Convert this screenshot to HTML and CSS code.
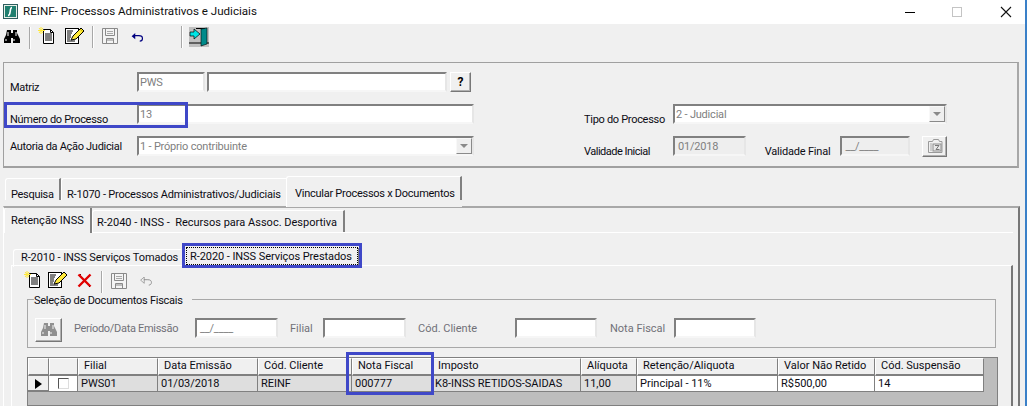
FILE: index.html
```html
<!DOCTYPE html>
<html lang="pt">
<head>
<meta charset="utf-8">
<title>REINF- Processos Administrativos e Judiciais</title>
<link rel="stylesheet" href="styles.css">
</head>
<body>
<div class="window">
  <header class="titlebar">
    <svg class="app-icon" width="16" height="16" viewBox="0 0 16 16"><rect x="0.5" y="0.5" width="14" height="14" fill="#e8efe8" stroke="#2f5f5f"/><rect x="2" y="2" width="11" height="11" fill="#1f7f6f"/><path d="M9 3.5C7.5 3.5 7.5 5 7.2 7.5S6.5 11.5 5 11.5" fill="none" stroke="#fff" stroke-width="1.6"/></svg>
    <span class="title-text">REINF- Processos Administrativos e Judiciais</span>
    <div class="win-controls">
      <svg width="12" height="12" viewBox="0 0 12 12"><path d="M1 6.5h10" stroke="#000"/></svg>
      <svg class="win-max" width="12" height="12" viewBox="0 0 12 12"><rect x="1.5" y="1.5" width="9" height="9" fill="none" stroke="#c4c4c4"/></svg>
      <svg class="win-close" width="12" height="12" viewBox="0 0 12 12"><path d="M1 1l10 10M11 1L1 11" stroke="#111" stroke-width="1.1"/></svg>
    </div>
  </header>

  <div class="toolbar">
    <svg class="ic-bin" width="16" height="14" viewBox="0 0 16 14"><path d="M3 0h4v3h2V0h4v3l1 2 2 4v4H9V8H7v5H0V9l2-4z" fill="#000"/><path d="M4 2v4M12 2v4M2 9v2M10 9v2" stroke="#fff" fill="none"/></svg>
    <i class="sep sep-a"></i>
    <svg class="ic-new" width="18" height="17" viewBox="0 0 18 17"><path d="M5.500 2.500h7l3 3v11h-10z" fill="#fff" stroke="#000"/><path d="M12.500 2.500v3h3" fill="none" stroke="#000"/><path d="M7 7h7M7 9h7M7 11h7M7 13h7" stroke="#000"/><path d="M3 0v7M0 3.500h7M1 1l4 5M5 1L1 6" stroke="#ffe93a" stroke-width="1"/></svg>
    <svg class="ic-edit" width="20" height="17" viewBox="0 0 20 17"><rect x="0.500" y="1.500" width="13" height="15" fill="#fff" stroke="#000"/><path d="M2 4h6M2 6h5M2 8h4M2 10h4M2 12h3M2 14h8" stroke="#000"/><path d="M6 13l2-4 8-8 3 3-8 8z" fill="#ffe93a" stroke="#000"/><path d="M15 2l3 3" stroke="#c9b400"/></svg>
    <i class="sep sep-b"></i>
    <svg class="ic-save" width="16" height="16" viewBox="0 0 16 16"><path d="M.5.500h15v15H.5z" fill="#f4f4f4" stroke="#8a8a8a"/><path d="M3.500 1v6.500h9V1M4 12h8M4.500 15v-4.500h7V15" fill="none" stroke="#8a8a8a"/><path d="M5 3.500h6M5 5.500h6" stroke="#a8a8a8"/></svg>
    <svg class="ic-undo" width="13" height="9" viewBox="0 0 13 10"><path d="M0 3.500l4-3.500v7z" fill="#000080"/><path d="M3 3h5c3 0 4 1.500 4 3s-1 3-3 3" fill="none" stroke="#000080" stroke-width="1.300"/></svg>
    <i class="sep sep-c"></i>
    <svg class="ic-exit" width="20" height="20" viewBox="0 0 20 20"><rect width="20" height="20" fill="#c0c0c0"/><path d="M0 16h20" stroke="#000"/><path d="M7 1.500h9V16" fill="none" stroke="#000"/><path d="M12 2l6-1v16l-6 2z" fill="#008a8a" stroke="#000" stroke-width=".6"/><path d="M1 5h4V2l6 5-6 5V9H1z" fill="#00e5e5" stroke="#000" stroke-width=".7"/></svg>
  </div>

  <section class="form-panel">
    <div class="form-grid">
      <label class="lbl lbl-matriz">Matriz</label>
      <div class="field-row row-a">
        <span class="input input-pws">PWS</span>
        <span class="input input-name"></span>
        <button class="btn btn-help" type="button">?</button>
      </div>
      <label class="lbl lbl-num">Número do Processo</label>
      <span class="input input-num">13</span>
      <label class="lbl lbl-tipo">Tipo do Processo</label>
      <div class="input select sel-tipo"><span>2 - Judicial</span><i class="drop"><b></b></i></div>
      <label class="lbl lbl-aut">Autoria da Ação Judicial</label>
      <div class="input select sel-aut"><span>1 - Próprio contribuinte</span><i class="drop"><b></b></i></div>
      <label class="lbl lbl-vi">Validade Inicial</label>
      <div class="field-row row-val">
        <span class="input input-ro input-vi">01/2018</span>
        <label class="lbl lbl-vf">Validade Final</label>
        <span class="input input-ro input-vf">__/____</span>
        <button class="btn btn-cal" type="button">
          <svg width="16" height="15" viewBox="0 0 16 15"><path d="M1.500 2.500h4l1-2h5l1 2h2.500v11H1.500z" fill="none" stroke="#9a9a9a"/><rect x="6" y="5" width="8" height="7" fill="#e8e8e8" stroke="#8c8c8c"/><path d="M8 6.500h4L9 10.500h3.500" fill="none" stroke="#777"/><path d="M3 5h2M3 7h2M3 9h2M3 11h2" stroke="#aaa"/></svg>
        </button>
      </div>
    </div>
  </section>

  <nav class="tabs tabs-top">
    <span class="tab t-pesq">Pesquisa</span>
    <span class="tab t-1070">R-1070 - Processos Administrativos/Judiciais</span>
    <span class="tab t-vinc is-active">Vincular Processos x Documentos</span>
  </nav>
  <section class="tab-panel">
    <nav class="tabs tabs-mid">
      <span class="tab t-ret is-active">Retenção INSS</span>
      <span class="tab t-2040">R-2040 - INSS -&nbsp; Recursos para Assoc. Desportiva</span>
    </nav>
    <div class="mid-panel">
      <nav class="tabs tabs-low">
        <span class="tab t-2010">R-2010 - INSS Serviços Tomados</span>
        <span class="tab t-2020 is-active"><em>R-2020 - INSS Serviços Prestados</em></span>
      </nav>
      <div class="low-panel">
        <div class="toolbar toolbar-low">
          <svg class="ic-new2" width="18" height="17" viewBox="0 0 18 17"><path d="M5.500 2.500h7l3 3v11h-10z" fill="#fff" stroke="#000"/><path d="M12.500 2.500v3h3" fill="none" stroke="#000"/><path d="M7 7h7M7 9h7M7 11h7M7 13h7" stroke="#000"/><path d="M3 0v7M0 3.500h7M1 1l4 5M5 1L1 6" stroke="#ffe93a"/></svg>
          <svg class="ic-edit2" width="20" height="17" viewBox="0 0 20 17"><rect x="0.500" y="1.500" width="13" height="15" fill="#fff" stroke="#000"/><path d="M2 4h6M2 6h5M2 8h4M2 10h4M2 12h3M2 14h8" stroke="#000"/><path d="M6 13l2-4 8-8 3 3-8 8z" fill="#ffe93a" stroke="#000"/></svg>
          <svg class="ic-del" width="15" height="15" viewBox="0 0 15 15"><path d="M1.500 1.500l12 12M13.500 1.500l-12 12" stroke="#e00000" stroke-width="2.400"/><path d="M3 1l1 1M12 14l1-1" stroke="#700"/></svg>
          <i class="sep sep-d"></i>
          <svg class="ic-save2" width="16" height="16" viewBox="0 0 16 16"><path d="M.5.500h15v15H.5z" fill="#f4f4f4" stroke="#8a8a8a"/><path d="M3.500 1v6.500h9V1M4 12h8M4.500 15v-4.500h7V15" fill="none" stroke="#8a8a8a"/><path d="M5 3.500h6M5 5.500h6" stroke="#a8a8a8"/></svg>
          <svg class="ic-undo2" width="13" height="9" viewBox="0 0 13 10"><path d="M0 3.500l4-3.500v7z" fill="none" stroke="#8a8a8a" stroke-width=".8"/><path d="M3.500 3h4.500c3 0 4 1.500 4 3s-1 3-3 3" fill="none" stroke="#8a8a8a"/></svg>
        </div>
        <fieldset class="docs">
          <legend>Seleção de Documentos Fiscais</legend>
          <div class="docs-row">
            <button class="btn btn-find" type="button">
              <svg width="16" height="14" viewBox="0 0 16 14"><path d="M3 0h4v3h2V0h4v3l1 2 2 4v4H9V8H7v5H0V9l2-4z" fill="#8f8f8f"/><path d="M4 2v4M12 2v4M2 9v2M10 9v2" stroke="#f4f4f4"/></svg>
            </button>
            <label class="dim l-per">Período/Data Emissão</label>
            <span class="input f-per">__/____</span>
            <label class="dim l-fil">Filial</label>
            <span class="input f-fil"></span>
            <label class="dim l-cli">Cód. Cliente</label>
            <span class="input f-cli"></span>
            <label class="dim l-nf">Nota Fiscal</label>
            <span class="input f-nf"></span>
          </div>
        </fieldset>
        <div class="data-grid">
          <div class="g-row g-head">
            <span></span><span></span><span>Filial</span><span>Data Emissão</span><span>Cód. Cliente</span><span>Nota Fiscal</span><span>Imposto</span><span>Alíquota</span><span>Retenção/Aliquota</span><span>Valor Não Retido</span><span>Cód. Suspensão</span>
          </div>
          <div class="g-row g-data">
            <span class="c-ind"><b></b></span><span class="c-chk"><i></i></span><span>PWS01</span><span>01/03/2018</span><span>REINF</span><span>000777</span><span>K8-INSS RETIDOS-SAIDAS</span><span>11,00</span><span class="c-w">Principal - 11%</span><span class="c-w">R$500,00</span><span class="c-w">14</span>
          </div>
        </div>
      </div>
    </div>
  </section>

  <div class="hl hl-num"></div>
  <div class="hl hl-tab"></div>
  <div class="hl hl-nf"></div>
</div>
</body>
</html>
```
FILE: styles.css
```css
* { box-sizing: border-box; }
html, body { margin: 0; height: 406px; overflow: hidden; }
body { font: 11px/14px Roboto, "Liberation Sans", sans-serif; color: #0c0c14; background: #f0f0f0; }

.window { position: relative; height: 406px; display: flex; flex-direction: column; border-right: 2px solid #3a80c8; background: #f0f0f0; }

/* title bar */
.titlebar { flex: none; height: 24px; background: #fff; display: flex; align-items: center; }
.app-icon { margin-left: 3px; flex: none; }
.title-text { margin-left: 4px; font-size: 11.600px; color: #111; position: relative; top: -1px; }
.win-controls { margin-left: auto; display: flex; align-items: center; }
.win-max { margin-left: 35px; }
.win-close { margin-left: 37px; margin-right: 13px; }

/* toolbars */
.toolbar { flex: none; height: 38px; display: flex; align-items: flex-start; }
.toolbar > svg { flex: none; }
.sep { display: block; flex: none; width: 1px; height: 22px; background: #a8a8a8; box-shadow: 1px 0 0 #fff; }
.ic-bin { margin: 6px 0 0 4px; }
.sep-a { margin: 3px 0 0 9px; }
.ic-new { margin: 3px 0 0 8px; }
.ic-edit { margin: 3px 0 0 9px; }
.sep-b { margin: 2px 0 0 7px; }
.ic-save { margin: 4px 0 0 9px; }
.ic-undo { margin: 9px 0 0 13px; }
.sep-c { margin: 2px 0 0 37px; }
.ic-exit { margin: 3px 0 0 7px; }

.toolbar-low { height: 26px; }
.ic-new2 { margin: 5px 0 0 12px; }
.ic-edit2 { margin: 5px 0 0 6px; }
.ic-del { margin: 7px 0 0 9px; }
.sep-d { margin: 5px 0 0 9px; }
.ic-save2 { margin: 7px 0 0 9px; }
.ic-undo2 { margin: 11px 0 0 13px; }

/* top form */
.form-panel { flex: none; height: 106px; width: 1016px; margin-left: 3px; border: 1px solid #a0a0a0; border-bottom-width: 2px; border-right-width: 2px; border-right-color: #a8a8a8; padding: 9px 0 0 6px; }
.form-grid { display: grid; grid-template-columns: 127px 337px 110px 89px 274px; grid-template-rows: 20px 20px 20px; row-gap: 12px; }
.lbl { padding-top: 9px; white-space: nowrap; letter-spacing: -0.3px; }
.lbl-matriz { grid-area: 1 / 1; }
.row-a { grid-area: 1 / 2; }
.lbl-num { grid-area: 2 / 1; }
.input-num { grid-area: 2 / 2; }
.lbl-tipo { grid-area: 2 / 4; }
.sel-tipo { grid-area: 2 / 5; }
.lbl-aut { grid-area: 3 / 1; padding-top: 4px; }
.sel-aut { grid-area: 3 / 2; }
.lbl-vi { grid-area: 3 / 4; letter-spacing: -0.5px; }
.row-val { grid-area: 3 / 5; }

.field-row { display: flex; align-items: flex-start; }
.input { display: block; height: 20px; background: #fff; border: 2px solid; border-color: #808080 #e6e6e6 #f6f6f6 #808080; color: #808080; padding: 1px 0 0 1px; font-size: 11px; letter-spacing: -0.2px; line-height: 15px; white-space: nowrap; overflow: hidden; }
.input-pws { width: 68px; }
.input-name { width: 240px; margin-left: 2px; }
.input-ro { background: #eee; }
.input-vi { width: 73px; padding-left: 3px; }
.input-vf { width: 70px; padding-left: 3px; }
.lbl-vf { margin-left: 19px; width: 76px; letter-spacing: -0.2px; }
.select { display: flex; justify-content: space-between; }
.drop { flex: none; width: 16px; margin-top: -1px; background: #efefef; border: 1px solid; border-color: #f8f8f8 #8a8a8a #8a8a8a #f8f8f8; display: flex; align-items: center; justify-content: center; }
.drop b { width: 0; height: 0; border: 4px solid transparent; border-top: 4px solid #8a8a8a; border-bottom: 0; }

.btn { display: flex; align-items: center; justify-content: center; padding: 0; margin: 0; font: inherit; background: #f0f0f0; border: 1px solid; border-color: #fff #777 #777 #fff; box-shadow: inset -1px -1px 0 #b0b0b0; }
.btn-help { width: 21px; height: 20px; margin-left: 3px; font-weight: 700; font-size: 12px; color: #000; }
.btn-cal { width: 25px; height: 21px; margin-left: 12px; }
.btn-find { width: 27px; height: 24px; flex: none; }

/* tabs */
.tabs { flex: none; display: flex; align-items: flex-start; }
.tab { display: block; white-space: nowrap; border-top: 1px solid #fff; border-left: 1px solid #fff; border-right: 2px solid #808080; border-top-left-radius: 3px; background: #f0f0f0; }
.tabs-top { height: 30px; margin: 8px 0 0 5px; }
.t-pesq { width: 56px; height: 22px; margin-top: 2px; padding: 9px 0 0 5px; letter-spacing: -0.3px; }
.t-1070 { width: 225px; height: 22px; margin-top: 2px; padding: 9px 0 0 5px; letter-spacing: -0.2px; border-right: 0; }
.t-vinc { width: 176px; height: 31px; padding: 10px 0 0 8px; position: relative; z-index: 1; margin-bottom: -2px; letter-spacing: -0.26px; }
.t-vinc::after { content: ""; position: absolute; right: -2px; bottom: 0; width: 2px; height: 7px; background: #f0f0f0; }

.tab-panel { flex: 1; min-height: 0; width: 1017px; margin-left: 3px; border-top: 2px solid #a8a8a8; border-left: 1px solid #fff; border-right: 2px solid #777; display: flex; flex-direction: column; }

.tabs-mid { height: 24px; }
.t-ret { width: 88px; height: 25px; padding: 6px 0 0 6px; border-top: 0; position: relative; z-index: 1; }
.t-2040 { width: 253px; height: 22px; margin-top: 2px; padding: 5px 0 0 4px; }
.mid-panel { flex: 1; min-height: 0; width: 1009px; border-top: 1px solid #fff; display: flex; flex-direction: column; }

.tabs-low { height: 32px; padding: 15px 0 0 9px; }
.t-2010 { width: 168px; height: 18px; margin-top: 1px; padding: 1px 0 0 7px; border-right: 0; letter-spacing: -0.1px; }
.t-2020 { width: 178px; height: 19px; margin-left: 1px; padding: 0 0 0 3px; border-top: 0; position: relative; z-index: 1; }
.t-2020 em { display: block; width: 172px; height: 18px; margin-top: -1px; padding: 3px 0 0 4px; font-style: normal; letter-spacing: -0.07px; outline: 1px dotted #000; outline-offset: -1px; }

.low-panel { flex: 1; min-height: 0; margin-left: 7px; width: 1002px; border-top: 1px solid #fff; border-left: 1px solid #fff; border-right: 2px solid #777; padding: 0 15px 0 15px; display: flex; flex-direction: column; }
.toolbar-low { margin-left: -15px; }

/* fieldset */
.docs { flex: none; height: 56px; margin: 0; padding: 0; border: 1px solid #a8a8a8; }
.docs legend { margin-left: 6px; padding: 4px 9px 0 0; line-height: 10px; letter-spacing: -0.25px; }
.docs-row { display: flex; align-items: flex-start; margin: 12px 0 0 7px; }
.docs-row .input { height: 20px; }
.dim { color: #707078; margin-top: 4px; white-space: nowrap; flex: none; }
.l-per { margin-left: 12px; width: 121px; letter-spacing: -0.3px; }
.f-per { width: 83px; padding-left: 3px; }
.l-fil { margin-left: 12px; width: 33px; }
.f-fil { width: 83px; }
.l-cli { margin-left: 12px; width: 97px; }
.f-cli { width: 82px; }
.l-nf { margin-left: 13px; width: 64px; }
.f-nf { width: 82px; }

/* grid */
.data-grid { flex: 1; min-height: 0; margin: 9px -2px 0 0; background: #bdbdbd; border: 1px solid #808080; }
.g-row { display: grid; grid-template-columns: 21px 29px 80px 100px 94px 80px 149px 56px 141px 97px 109px; }
.g-head span { display: block; height: 18px; background: #f0f0f0; border-left: 1px solid #fff; border-top: 1px solid #fff; border-right: 1px solid #808080; border-bottom: 2px solid #808080; padding: 0 0 0 5px; white-space: nowrap; overflow: hidden; }
.g-data span { display: block; height: 16px; background: #dedede; border-right: 1px solid #808080; border-bottom: 1px solid #808080; padding: 1px 0 0 3px; line-height: 14px; white-space: nowrap; overflow: hidden; }
.g-data .c-w { background: #fff; }
.g-data .c-ind { background: #f0f0f0; border-bottom: 2px solid #808080; padding: 3px 0 0 7px; }
.c-ind b { display: block; width: 0; height: 0; border: 5px solid transparent; border-left: 7px solid #000; border-right: 0; }
.g-data .c-chk { background: #fff; padding: 2px 0 0 9px; }
.c-chk i { display: block; width: 11px; height: 11px; border: 1px solid; border-color: #555 #ddd #ddd #555; background: #fff; }

/* annotation boxes */
.hl { position: absolute; border: 3px solid #3f48c8; z-index: 5; pointer-events: none; }
.hl-num { left: 4px; top: 102px; width: 184px; height: 26px; }
.hl-tab { left: 182px; top: 243px; width: 180px; height: 25px; }
.hl-nf { left: 346px; top: 352px; width: 88px; height: 43px; }
```
